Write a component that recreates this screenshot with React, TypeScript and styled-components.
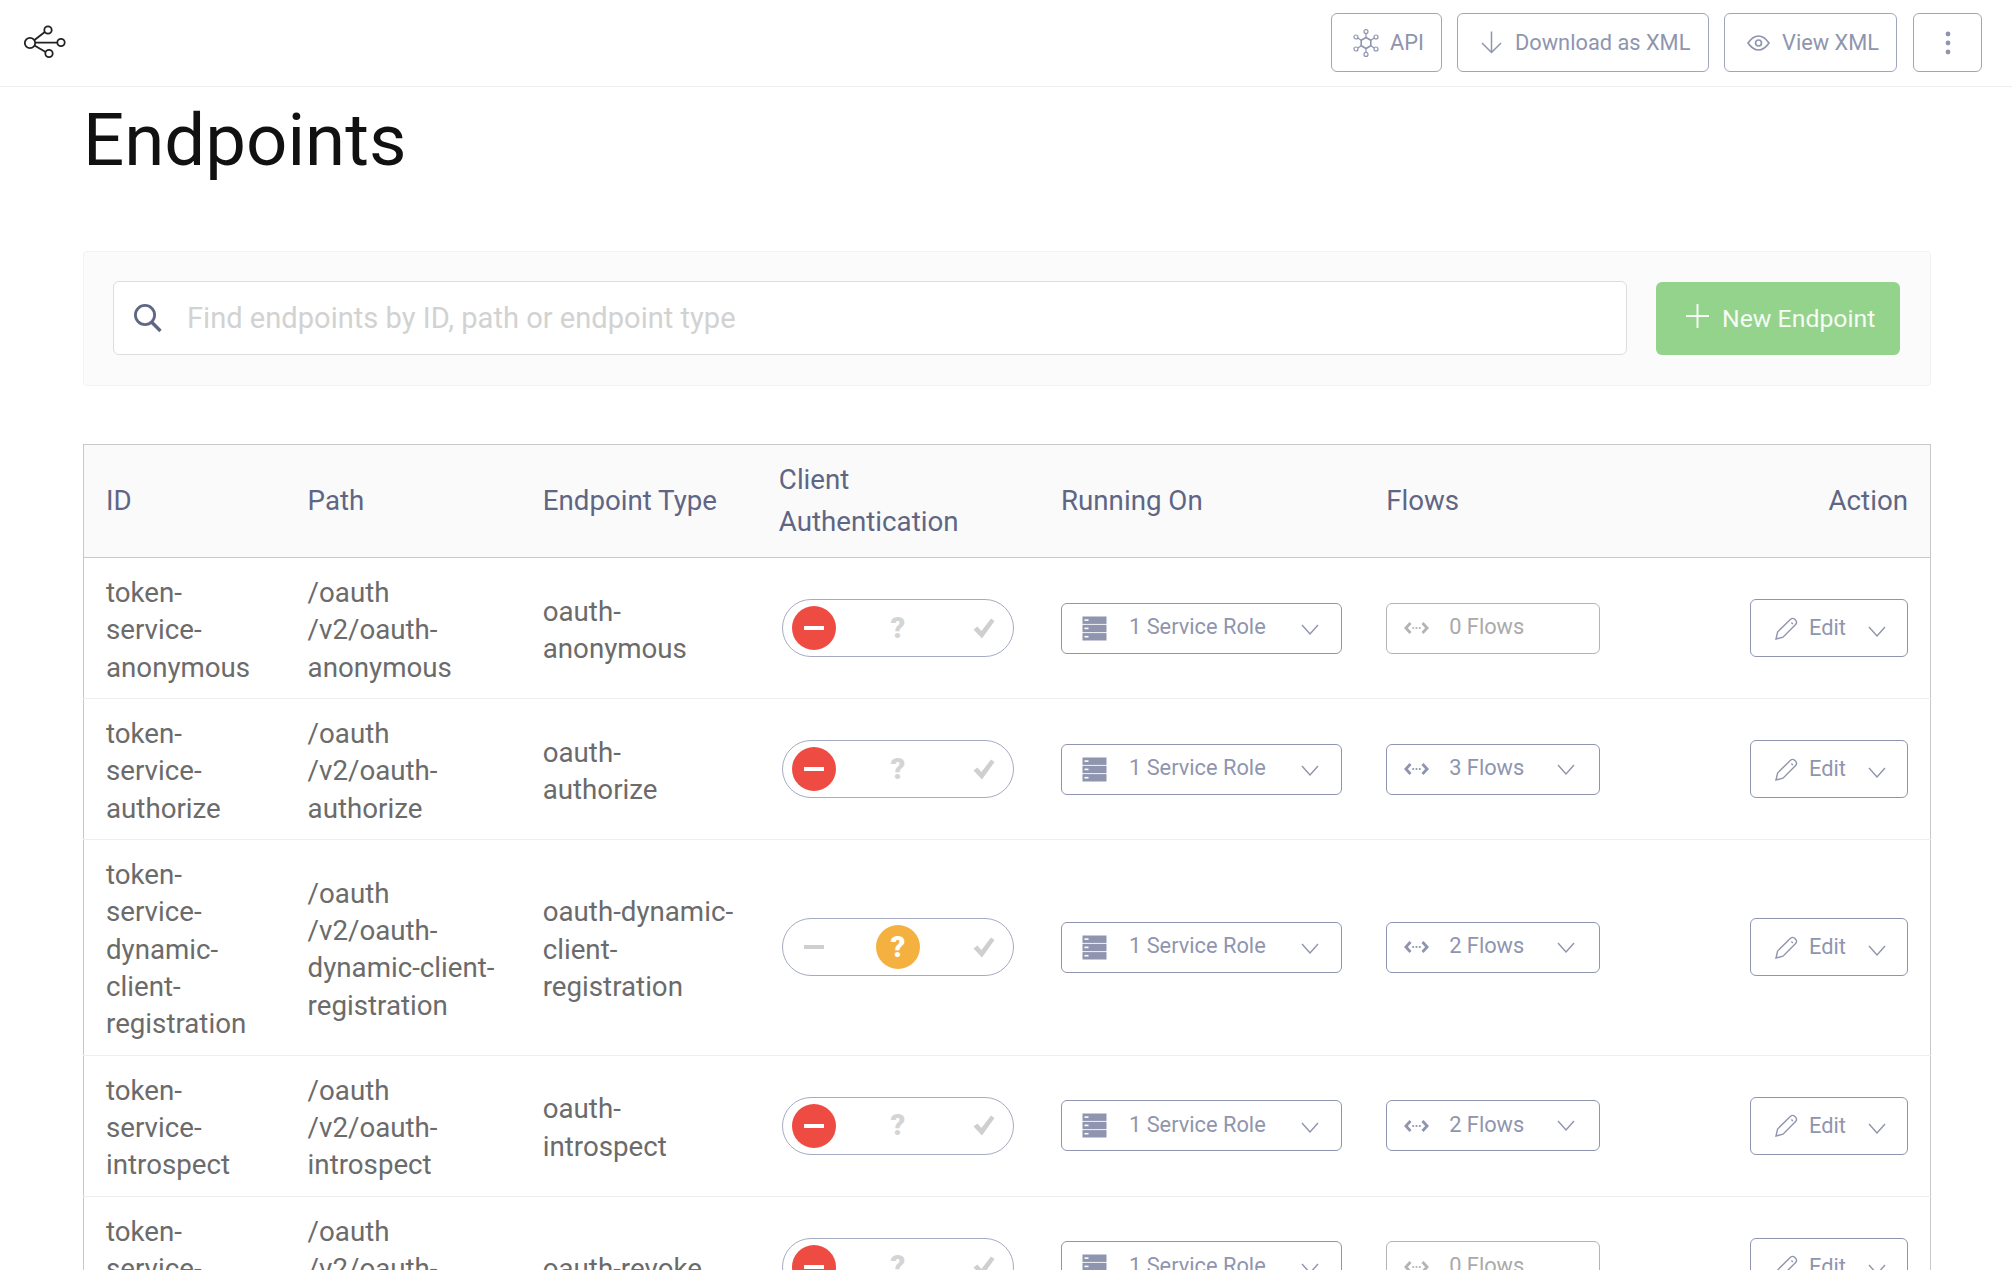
import React from "react";
import styled, { createGlobalStyle } from "styled-components";

type AuthState = "deny" | "unknown";

interface EndpointRow {
  id: string;
  path: string;
  type: string;
  auth: AuthState;
  flows: number;
}

const ENDPOINTS: EndpointRow[] = [
  { id: "token-\nservice-\nanonymous", path: "/oauth\n/v2/oauth-\nanonymous", type: "oauth-\nanonymous", auth: "deny", flows: 0 },
  { id: "token-\nservice-\nauthorize", path: "/oauth\n/v2/oauth-\nauthorize", type: "oauth-\nauthorize", auth: "deny", flows: 3 },
  {
    id: "token-\nservice-\ndynamic-\nclient-\nregistration",
    path: "/oauth\n/v2/oauth-\ndynamic-client-\nregistration",
    type: "oauth-dynamic-\nclient-\nregistration",
    auth: "unknown",
    flows: 2,
  },
  { id: "token-\nservice-\nintrospect", path: "/oauth\n/v2/oauth-\nintrospect", type: "oauth-\nintrospect", auth: "deny", flows: 2 },
  { id: "token-\nservice-\nrevoke", path: "/oauth\n/v2/oauth-\nrevoke", type: "oauth-revoke", auth: "deny", flows: 0 },
];

function LogoIcon() {
  return (
    <svg width="46" height="38" viewBox="0 0 46 38" fill="none" stroke="#222" strokeWidth="1.8">
      <circle cx="7" cy="19" r="5.2" />
      <circle cx="25" cy="6" r="3.7" />
      <circle cx="38" cy="18.5" r="3.7" />
      <circle cx="26" cy="29.5" r="3.7" />
      <path d="M11.5 16 L21.8 8 M12.2 18.7 H34.3 M11.5 21.5 L22.6 28" />
    </svg>
  );
}

function HubIcon() {
  return (
    <svg width="26" height="28" viewBox="0 0 26 28" fill="none" stroke="#8f95ae" strokeWidth="1.2">
      <path d="M13 8.5 L17.8 11.2 V16.8 L13 19.5 L8.2 16.8 V11.2 Z" strokeWidth="1.6" />
      <circle cx="13" cy="2.6" r="2" />
      <circle cx="13" cy="25.4" r="2" />
      <circle cx="3" cy="8" r="2" />
      <circle cx="23" cy="8" r="2" />
      <circle cx="3" cy="20" r="2" />
      <circle cx="23" cy="20" r="2" />
      <path d="M13 4.6 V8.5 M13 19.5 V23.4 M4.8 9 L8.2 11.2 M21.2 9 L17.8 11.2 M4.8 19 L8.2 16.8 M21.2 19 L17.8 16.8" />
    </svg>
  );
}

function ArrowDownIcon() {
  return (
    <svg width="21" height="23" viewBox="0 0 21 23" fill="none" stroke="#8f95ae" strokeWidth="1.5">
      <path d="M10.5 0.5 V21.5 M1 12 L10.5 21.5 L20 12" />
    </svg>
  );
}

function EyeIcon() {
  return (
    <svg width="23" height="16" viewBox="0 0 23 16" fill="none" stroke="#8f95ae" strokeWidth="1.7">
      <path d="M1 8 C4.5 3 8 1 11.5 1 C15 1 18.5 3 22 8 C18.5 13 15 15 11.5 15 C8 15 4.5 13 1 8 Z" />
      <circle cx="11.5" cy="8" r="3" />
    </svg>
  );
}

function DotsIcon() {
  return (
    <svg width="6" height="24" viewBox="0 0 6 24" fill="#8f95ae">
      <circle cx="3" cy="3" r="2.4" />
      <circle cx="3" cy="12" r="2.4" />
      <circle cx="3" cy="21" r="2.4" />
    </svg>
  );
}

function SearchIcon() {
  return (
    <svg width="28" height="28" viewBox="0 0 28 28" fill="none" stroke="#5f6783" strokeWidth="2.8">
      <circle cx="11" cy="11" r="9.6" />
      <path d="M17.5 18 L26.5 27" strokeWidth="3.4" />
    </svg>
  );
}

function PlusIcon() {
  return (
    <svg width="23" height="24" viewBox="0 0 23 24" fill="none" stroke="#f6fbf5" strokeWidth="2">
      <path d="M11.5 0 V24 M0 12 H23" />
    </svg>
  );
}

function ServerIcon() {
  return (
    <svg width="25" height="25" viewBox="0 0 25 25">
      <g fill="#8f95ae">
        <rect x="0.5" y="0.5" width="24" height="7.4" />
        <rect x="0.5" y="8.8" width="24" height="7.4" />
        <rect x="0.5" y="17.1" width="24" height="7.4" />
      </g>
      <g fill="#fff">
        <rect x="2.5" y="3.3" width="4" height="1.6" />
        <rect x="2.5" y="11.6" width="4" height="1.6" />
        <rect x="2.5" y="19.9" width="4" height="1.6" />
      </g>
    </svg>
  );
}

function FlowIcon({ color }: { color: string }) {
  return (
    <svg width="25" height="14" viewBox="0 0 25 14" fill="none" stroke={color} strokeWidth="2.8">
      <path d="M6.5 2 L1.9 7 L6.5 12 M18.5 2 L23.1 7 L18.5 12" />
      <g fill={color} stroke="none">
        <circle cx="9.2" cy="7" r="1.1" />
        <circle cx="12.5" cy="7" r="1.1" />
        <circle cx="15.8" cy="7" r="1.1" />
      </g>
    </svg>
  );
}

function ChevronIcon() {
  return (
    <svg width="18" height="11" viewBox="0 0 18 11" fill="none" stroke="#8f95ae" strokeWidth="1.4">
      <path d="M1 1 L9 10 L17 1" />
    </svg>
  );
}

function PencilIcon() {
  return (
    <svg width="23" height="23" viewBox="0 0 23 23" fill="none" stroke="#8f95ae" strokeWidth="1.4">
      <path d="M1 22 L2.6 15 L15.5 2.2 Q17.4 0.6 19.4 2 L20.8 3.4 Q22.4 5.6 20.6 7.4 L8 20.2 Z" />
      <path d="M16.4 5.6 L17.8 7" />
    </svg>
  );
}

function CheckIcon() {
  return (
    <svg width="22" height="21" viewBox="0 0 22 21" fill="#cfcfcf">
      <path d="M0.5 11.5 L4.4 8.6 L8.4 13 L18 0.5 L21.5 3 L9 20.5 Z" />
    </svg>
  );
}

function AuthToggle({ state }: { state: AuthState }) {
  return (
    <Toggle>
      <Slot $tone={state === "deny" ? "#ee4b43" : undefined}>
        <MinusBar $on={state === "deny"} />
      </Slot>
      <Slot $tone={state === "unknown" ? "#f5b140" : undefined}>
        <Question $on={state === "unknown"}>?</Question>
      </Slot>
      <Slot>
        <CheckIcon />
      </Slot>
    </Toggle>
  );
}

function EndpointTableRow({ row }: { row: EndpointRow }) {
  const hasFlows = row.flows > 0;
  return (
    <tr>
      <TextCell>{row.id}</TextCell>
      <TextCell>{row.path}</TextCell>
      <TextCell>{row.type}</TextCell>
      <Cell>
        <AuthToggle state={row.auth} />
      </Cell>
      <Cell>
        <RoleSelect>
          <ServerIcon />
          <SelectLabel>1 Service Role</SelectLabel>
          <ChevronSlot $drop={3}>
            <ChevronIcon />
          </ChevronSlot>
        </RoleSelect>
      </Cell>
      <Cell>
        <FlowSelect $muted={!hasFlows}>
          <FlowIcon color={hasFlows ? "#8f95ae" : "#b4b4b4"} />
          <SelectLabel>{row.flows} Flows</SelectLabel>
          {hasFlows && (
            <ChevronSlot $drop={0}>
              <ChevronIcon />
            </ChevronSlot>
          )}
        </FlowSelect>
      </Cell>
      <Cell>
        <EditButton>
          <PencilIcon />
          <EditLabel>Edit</EditLabel>
          <ChevronSlot $drop={6}>
            <ChevronIcon />
          </ChevronSlot>
        </EditButton>
      </Cell>
    </tr>
  );
}

export default function App() {
  return (
    <Page>
      <GlobalStyle />
      <TopBar>
        <LogoIcon />
        <TopActions>
          <TopButton $width="111px" $pad="21px" $gap="11px">
            <HubIcon />
            API
          </TopButton>
          <TopButton $width="252px" $pad="23px" $gap="13px">
            <ArrowDownIcon />
            Download as XML
          </TopButton>
          <TopButton $width="173px" $pad="22px" $gap="12px">
            <EyeIcon />
            View XML
          </TopButton>
          <MoreButton>
            <DotsIcon />
          </MoreButton>
        </TopActions>
      </TopBar>
      <Content>
        <Title>Endpoints</Title>
        <SearchPanel>
          <SearchBox>
            <SearchIcon />
            <SearchInput placeholder="Find endpoints by ID, path or endpoint type" />
          </SearchBox>
          <NewButton>
            <PlusMark>
              <PlusIcon />
            </PlusMark>
            <NewLabel>New Endpoint</NewLabel>
          </NewButton>
        </SearchPanel>
        <Table>
          <colgroup>
            <col width="202" />
            <col width="235" />
            <col width="236" />
            <col width="282" />
            <col width="325" />
            <col width="220" />
            <col width="346" />
          </colgroup>
          <thead>
            <tr>
              <HeadCell>ID</HeadCell>
              <HeadCell>Path</HeadCell>
              <HeadCell>Endpoint Type</HeadCell>
              <HeadCell>
                Client
                <br />
                Authentication
              </HeadCell>
              <HeadCell>Running On</HeadCell>
              <HeadCell>Flows</HeadCell>
              <HeadCell $right>Action</HeadCell>
            </tr>
          </thead>
          <tbody>
            {ENDPOINTS.map(row => (
              <EndpointTableRow key={row.id} row={row} />
            ))}
          </tbody>
        </Table>
      </Content>
    </Page>
  );
}

const GlobalStyle = createGlobalStyle`
  html, body {
    margin: 0;
    height: 100%;
    overflow: hidden;
    background: #fff;
  }

  * {
    box-sizing: border-box;
  }
`;

const Page = styled.div`
  height: 100vh;
  overflow: hidden;
  font-family: Roboto, "Liberation Sans", sans-serif;
`;

const TopBar = styled.header`
  display: flex;
  justify-content: space-between;
  align-items: center;
  height: 87px;
  padding: 0 30px 1px 23px;
  border-bottom: 1px solid #eeeeee;
`;

const TopActions = styled.div`
  display: flex;
  gap: 15px;
`;

const TopButton = styled.button<{ $width?: string; $pad: string; $gap: string }>`
  display: flex;
  align-items: center;
  gap: ${p => p.$gap};
  width: ${p => p.$width ?? "auto"};
  height: 59px;
  padding: 0 0 0 ${p => p.$pad};

  font-family: inherit;
  font-size: 21.8px;
  color: #8f95ae;

  background: #fff;
  border: 1px solid #a0a5ba;
  border-radius: 6px;
`;

const MoreButton = styled(TopButton).attrs({ $width: "69px", $pad: "0", $gap: "0" })`
  justify-content: center;
  margin-left: 1px;
`;

const Content = styled.main`
  width: 1848px;
  margin-left: 83px;
`;

const Title = styled.h1`
  height: 164px;
  margin: 0;

  font-size: 72.6px;
  font-weight: 400;
  line-height: 108px;
  color: #111111;
`;

const SearchPanel = styled.section`
  display: flex;
  align-items: center;
  gap: 29px;
  height: 135px;
  padding: 0 30px 0 29px;
  margin-bottom: 58px;

  background: #fbfbfb;
  border: 1px solid #f3f3f3;
  border-radius: 4px;
`;

const SearchBox = styled.div`
  display: flex;
  align-items: center;
  gap: 25px;
  flex: 1;
  height: 74px;
  margin-top: -1px;
  padding-left: 20px;

  background: #fff;
  border: 1px solid #dddddd;
  border-radius: 6px;
`;

const SearchInput = styled.input`
  flex: 1;
  border: 0;
  outline: 0;
  padding: 0;
  background: transparent;

  font-family: inherit;
  font-size: 29.1px;
  color: #555;

  &::placeholder {
    color: #d2d2d2;
    opacity: 1;
  }
`;

const NewButton = styled.button`
  display: flex;
  align-items: center;
  gap: 13px;
  width: 244px;
  height: 73px;
  padding: 0 0 0 30px;

  font-family: inherit;
  font-size: 24.8px;
  color: #f6fbf5;

  background: #94d38b;
  border: 0;
  border-radius: 6px;
`;

const PlusMark = styled.span`
  display: flex;
  margin-top: -6px;
`;

const NewLabel = styled.span`
  margin-top: -1px;
`;

const Table = styled.table`
  width: 1848px;
  table-layout: fixed;
  border-collapse: collapse;
  border: 1px solid #c8c8c8;
`;

const HeadCell = styled.th<{ $right?: boolean }>`
  padding: 14px 22px;

  font-size: 27.7px;
  font-weight: 400;
  line-height: 42px;
  text-align: ${p => (p.$right ? "right" : "left")};
  color: #5f6684;

  background: #fafafa;
  border-bottom: 1px solid #c8c8c8;
`;

const Cell = styled.td`
  padding: 14px 22px;

  font-size: 27.7px;
  line-height: 37.34px;
  white-space: pre-line;
  color: #6b6b6b;

  border-bottom: 1px solid #eeeeee;
`;

const TextCell = styled(Cell)`
  padding-top: 16px;
  padding-bottom: 12px;
`;

const Toggle = styled.div`
  display: flex;
  align-items: center;
  gap: 41px;
  width: 232px;
  height: 58px;
  margin-left: 3px;
  padding-left: 9px;

  background: #fff;
  border: 1px solid #a5abc2;
  border-radius: 29px;
`;

const Slot = styled.div<{ $tone?: string }>`
  display: flex;
  justify-content: center;
  align-items: center;
  width: 44px;
  height: 44px;
  flex: none;

  background: ${p => p.$tone ?? "transparent"};
  border-radius: 50%;

  &:nth-child(2) {
    margin-left: -1px;
    margin-right: 1px;
  }
`;

const MinusBar = styled.div<{ $on: boolean }>`
  width: 20px;
  height: 4px;
  background: ${p => (p.$on ? "#fff" : "#cfcfcf")};
`;

const Question = styled.span<{ $on: boolean }>`
  font-size: 29px;
  font-weight: 900;
  line-height: 1;
  color: ${p => (p.$on ? "#fff" : "#d4d4d4")};
`;

const SelectBase = styled.button`
  display: flex;
  align-items: center;
  height: 51px;

  font-family: inherit;
  font-size: 21.8px;
  color: #8f95ae;

  background: #fff;
  border: 1px solid #8f95ae;
  border-radius: 6px;
`;

const SelectLabel = styled.span`
  margin-top: -3px;
`;

const EditLabel = styled.span`
  margin-top: -1px;
`;

const RoleSelect = styled(SelectBase)`
  gap: 22px;
  width: 281px;
  padding: 0 22px 0 20px;
`;

const FlowSelect = styled(SelectBase)<{ $muted: boolean }>`
  gap: 20px;
  width: 214px;
  padding: 0 24px 0 17px;
  color: ${p => (p.$muted ? "#aaaaaa" : "#8f95ae")};
  border-color: ${p => (p.$muted ? "#b4b4b4" : "#8f95ae")};
`;

const ChevronSlot = styled.span<{ $drop: number }>`
  display: flex;
  margin-left: auto;
  margin-top: ${p => p.$drop}px;
`;

const EditButton = styled(SelectBase)`
  gap: 11px;
  width: 158px;
  height: 58px;
  margin-left: auto;
  padding: 0 21px 0 24px;
`;
